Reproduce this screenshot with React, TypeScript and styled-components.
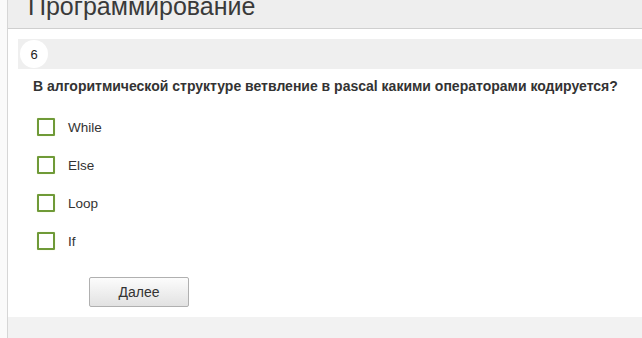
import React from "react";
import styled, { createGlobalStyle } from "styled-components";

const GlobalStyle = createGlobalStyle`
  html, body {
    margin: 0;
    padding: 0;
    background: #fafafa;
  }
  body {
    font-family: "Liberation Sans", Arial, sans-serif;
    color: #333;
  }
`;

const Page = styled.div`
  padding-left: 7px;
  height: 338px;
  overflow: hidden;
`;

const Frame = styled.div`
  border-left: 1px solid #d6d6d6;
  background: #f2f2f2;
  height: 100%;
  display: flex;
  flex-direction: column;
`;

const Header = styled.div`
  height: 28px;
  background: #eeeeee;
  border-bottom: 1px solid #cfcfcf;
  overflow: hidden;
  padding-left: 20px;
`;

const Title = styled.h1`
  margin: -8px 0 0;
  font-size: 25px;
  line-height: 28px;
  font-weight: normal;
  color: #3a3a3a;
  white-space: nowrap;
`;

const Content = styled.div`
  background: #fff;
  padding: 10px 0 10px 10px;
`;

const NumberBar = styled.div`
  height: 30px;
  background: #efefef;
  display: flex;
  align-items: center;
  padding-left: 2px;
`;

const NumberBadge = styled.div`
  width: 28px;
  height: 28px;
  border-radius: 50%;
  background: #fff;
  display: flex;
  align-items: center;
  justify-content: center;
  font-size: 13px;
  color: #222;
`;

const Question = styled.div`
  margin-top: 9px;
  padding-left: 15px;
  font-size: 14px;
  line-height: 16px;
  font-weight: bold;
  color: #333;
  white-space: nowrap;
`;

const Options = styled.div`
  margin-top: 14px;
  padding-left: 19px;
  display: flex;
  flex-direction: column;
`;

const Option = styled.label`
  height: 38px;
  display: flex;
  align-items: center;
  gap: 13px;
  font-size: 13.5px;
  color: #333;
  cursor: pointer;
`;

const Box = styled.span`
  width: 14px;
  height: 14px;
  border: 2px solid #6f9a38;
  border-radius: 1px;
  box-shadow: 0 0 1px #d8ec9a;
  flex-shrink: 0;
`;

const NextButton = styled.button`
  margin: 17px 0 0 71px;
  width: 100px;
  height: 30px;
  border: 1px solid #b0b0b0;
  border-radius: 2px;
  background: linear-gradient(#fcfcfc, #e2e2e2);
  font-family: "Liberation Sans", Arial, sans-serif;
  font-size: 14px;
  color: #333;
  cursor: pointer;
`;

const answers = ["While", "Else", "Loop", "If"];

export default function App() {
  return (
    <>
      <GlobalStyle />
      <Page>
        <Frame>
          <Header>
            <Title>Программирование</Title>
          </Header>
          <Content>
            <NumberBar>
              <NumberBadge>6</NumberBadge>
            </NumberBar>
            <Question>
              В алгоритмической структуре ветвление в pascal какими операторами кодируется?
            </Question>
            <Options>
              {answers.map((a) => (
                <Option key={a}>
                  <Box />
                  {a}
                </Option>
              ))}
            </Options>
            <NextButton>Далее</NextButton>
          </Content>
        </Frame>
      </Page>
    </>
  );
}
